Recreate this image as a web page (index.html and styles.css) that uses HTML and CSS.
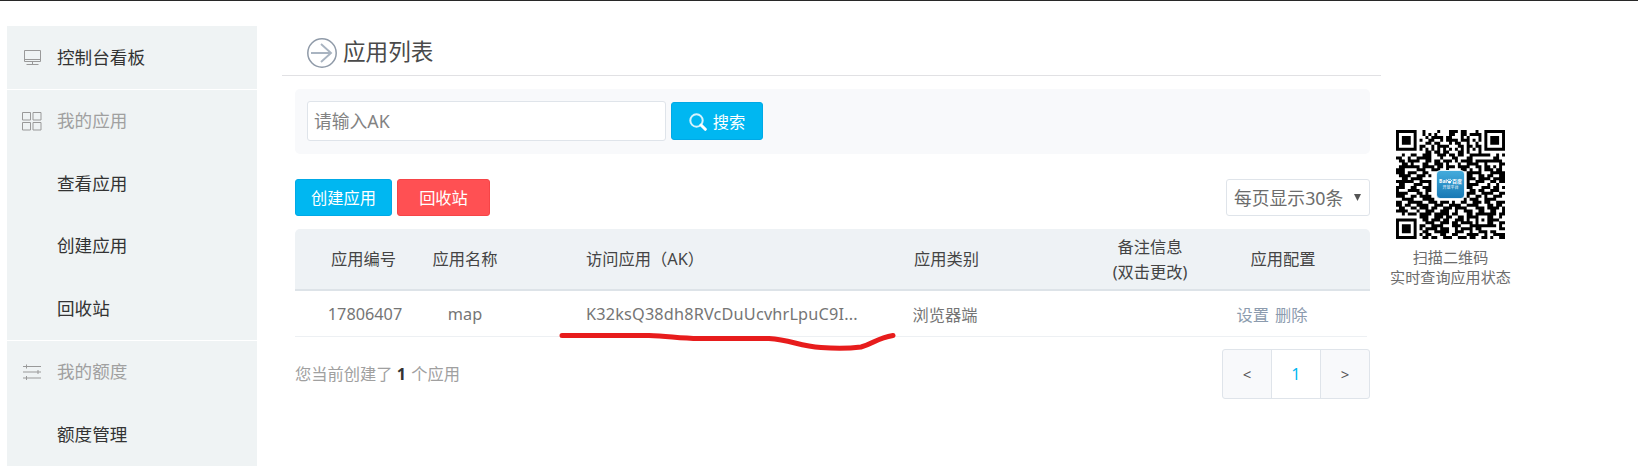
FILE: index.html
```html
<!DOCTYPE html>
<html lang="zh-CN">
<head>
<meta charset="utf-8">
<title>应用列表</title>
<link rel="stylesheet" href="styles.css">
</head>
<body>
<div class="page">
  <nav class="sidebar">
    <div class="group">
      <a class="item"><svg class="nav-icon" viewBox="0 0 20 20"><path d="M2.500 3.500h16v11h-16zM2.500 12.500h16M10.500 15v2.500M4.500 17.500h12"/></svg>控制台看板</a>
    </div>
    <div class="group">
      <a class="item muted"><svg class="nav-icon" viewBox="0 0 20 20"><path d="M.5 1.500h8v7.500h-8zM11 1.500h8v7.500h-8zM.5 11.500h8v7.500h-8zM11 11.500h8v7.500h-8z"/></svg>我的应用</a>
      <a class="item">查看应用</a>
      <a class="item">创建应用</a>
      <a class="item">回收站</a>
    </div>
    <div class="group">
      <a class="item muted"><svg class="nav-icon" viewBox="0 0 20 20"><path d="M1 4.500h18M1 10h18M1 16h18M4.500 2.500v4M16 8v4M4.500 14v4"/></svg>我的额度</a>
      <a class="item">额度管理</a>
    </div>
  </nav>
  <main class="main">
    <h1 class="title"><svg class="title-icon" viewBox="0 0 30 30"><circle cx="15" cy="15" r="14.200"/><path d="M4 15h19M14 6l10 9-10 9"/></svg>应用列表</h1>
    <div class="content">
      <div class="search">
        <input class="field" placeholder="请输入AK">
        <button class="btn search-btn"><svg class="search-icon" viewBox="0 0 18 18"><circle cx="7.500" cy="7.500" r="6.200"/><path d="M12 12l4.300 4.300" class="handle"/></svg>搜索</button>
      </div>
      <div class="toolbar">
        <button class="btn create">创建应用</button>
        <button class="btn recycle">回收站</button>
        <div class="select"><span>每页显示30条</span><svg class="caret" viewBox="0 0 8 8"><path d="M0 0h8L4 8z"/></svg></div>
      </div>
      <div class="row head">
        <div>应用编号</div><div>应用名称</div><div class="ak">访问应用（AK）</div><div>应用类别</div><div class="remark">备注信息<br>(双击更改)</div><div>应用配置</div>
      </div>
      <div class="row data">
        <div class="num">17806407</div><div>map</div><div class="ak key"><span class="key-text">K32ksQ38dh8RVcDuUcvhrLpuC9I...</span><svg class="underline" viewBox="0 0 336 20"><path d="M3 4.500H90C110 5 120 7.500 140 7.500H210C232 9 240 15 262 16.500C275 17.500 290 17.500 302 16C314 13 318 7 334 4.500"/></svg></div><div class="kind">浏览器端</div><div></div><div class="actions"><a>设置</a><a>删除</a></div>
      </div>
      <div class="footer">
        <p class="count">您当前创建了 <b>1</b> 个应用</p>
        <div class="pager"><span>&lt;</span><span class="current">1</span><span>&gt;</span></div>
      </div>
    </div>
  </main>
  <aside class="qr-box">
    <div class="qr"><svg id="qr" viewBox="0 0 37 37"></svg>
      <div class="badge"><span class="brand">Bai<svg class="paw" viewBox="0 0 8 8"><ellipse cx="4" cy="5.700" rx="2.600" ry="2.100"/><circle cx="1" cy="3.500" r="1"/><circle cx="2.900" cy="1.300" r="1"/><circle cx="5.100" cy="1.300" r="1"/><circle cx="7" cy="3.500" r="1"/></svg>百度</span><span class="sub">开放平台</span></div>
    </div>
    <p class="qr-text">扫描二维码<br>实时查询应用状态</p>
  </aside>
</div>
<script src="qr.js"></script>
</body>
</html>
```
FILE: styles.css
```css
* { box-sizing: border-box; }
body {
  margin: 0;
  height: 466px;
  overflow: hidden;
  background: #fff;
  border-top: 1px solid #282828;
  font-family: "Noto Sans", "Noto Sans CJK SC", sans-serif;
  font-size: 16.25px;
  font-weight: 400;
  color: #444;
}
.page { display: flex; padding-left: 7px; }
.sidebar { width: 250px; margin-top: 25px; font-size: 17.6px; color: #333; }
.group { background: #eff3f4; margin-bottom: 1px; }
.item { display: flex; align-items: center; height: 62.5px; padding: 0 0 2px 50px; }
.item.muted { color: #a0a0a0; }
.nav-icon { width: 20px; height: 20px; margin: 2px 15px 0 -35px; fill: none; stroke: #999; stroke-width: 1; }
.main { width: 1099px; margin-left: 25px; }
.title {
  display: flex; align-items: center; gap: 6px;
  height: 75px; margin: 0; padding: 26px 0 0 25px;
  border-bottom: 1px solid #e1e1e4;
  font-size: 22.6px; font-weight: 400; color: #4a4a4a; line-height: 47px;
}
.title-icon { width: 30px; height: 30px; margin-top: 4px; fill: none; stroke: #8f9aa8; stroke-width: 1.5; }
.title-icon path { stroke: #a9b4c1; stroke-width: 1.9; }
.content { width: 1075px; margin: 13px 0 0 13px; }
.search { display: flex; align-items: center; gap: 5px; height: 65px; padding: 0 0 2px 12px; border-radius: 5px; background: #f8f9fb; }
.field {
  width: 359px; height: 40px; padding: 0 6px;
  border: 1px solid #dfe4ea; border-radius: 3px; background: #fff;
  font: inherit; font-size: 17.8px;
}
.field::placeholder { color: #828282; }
.btn {
  height: 37px; padding: 0 0 1px; border: 1px solid #00a9e6; border-radius: 3px;
  background: #00b7f1; color: #fff; font: inherit;
}
.search-btn { display: flex; align-items: center; justify-content: center; gap: 6px; width: 92px; height: 38px; margin-top: 1px; }
.search-icon { width: 18px; height: 18px; margin-top: 2px; fill: none; stroke: #d5f3fd; stroke-width: 2; }
.handle { stroke: #fff; stroke-width: 3; stroke-linecap: round; }
.toolbar { display: flex; gap: 5px; margin-top: 25px; }
.create { width: 97px; }
.recycle { width: 93px; background: #ff5053; border-color: #f64447; }
.select {
  display: flex; align-items: center; justify-content: space-between;
  width: 144px; height: 37px; margin-left: auto; padding: 0 8px 1px 7px;
  border: 1px solid #dfe4ea; border-radius: 3px;
  font-size: 17.8px; color: #6c6c6c;
}
.caret { width: 7px; height: 7px; fill: #555; margin-top: 0; }
.row { display: grid; grid-template-columns: 137px 66px 382px 133px 204px 132px; align-items: center; text-align: center; white-space: nowrap; }
.head { height: 62px; margin-top: 13px; border-radius: 5px 5px 0 0; border-bottom: 2px solid #dde3e8; background: #eef2f5; line-height: 25px; padding-top: 1px; }
.ak { padding-left: 88px; text-align: left; }
.remark { padding-left: 70px; }
.data { height: 46px; margin: 0 3px 0 0; color: #757575; box-shadow: inset 0 -1px #edf0f3; }
.key { position: relative; }
.key-text { letter-spacing: .18px; }
.underline { position: absolute; left: 61px; top: 28px; width: 336px; height: 20px; overflow: visible; z-index: 1; }
.underline path { fill: none; stroke: #e71c1c; stroke-width: 5; stroke-linecap: round; stroke-linejoin: round; }
.num { padding-left: 3px; }
.kind { padding-right: 3px; }
.actions { display: flex; justify-content: center; gap: 6px; padding-right: 22px; color: #8c9bae; }
.footer { display: flex; justify-content: space-between; margin-top: 12px; }
.count { margin: 0; line-height: 50px; color: #a0a0a0; }
.count b { color: #333; margin: 0 1px 0 0; }
.pager { display: flex; width: 148px; height: 50px; border: 1px solid #dfe4ea; border-radius: 3px; background: #f8f9fb; color: #555; font-size: 15px; }
.pager span { flex: 1; display: flex; align-items: center; justify-content: center; }
.pager .current { border: solid #dfe4ea; border-width: 0 1px; background: #fff; color: #00b7f1; font-size: 16.25px; }
.qr-box { width: 140px; margin-top: 129px; }
.qr { position: relative; width: 109px; height: 109px; margin-left: 15px; }
.qr > svg { display: block; width: 109px; height: 109px; }
.badge {
  position: absolute; left: 40px; top: 40px; width: 29px; height: 29px;
  display: flex; flex-direction: column; align-items: center; justify-content: center; gap: 1px;
  border: 1px solid #e4f3fa; border-radius: 4px; background: linear-gradient(#43abdc, #1779b5);
  color: #fff; white-space: nowrap; line-height: 6px;
}
.brand { display: flex; align-items: center; font-size: 5px; font-weight: 700; }
.paw { width: 5px; height: 6px; fill: #fff; }
.sub { font-size: 4px; }
.qr-text { margin: 8px 0 0; width: 139px; text-align: center; font-size: 15.1px; line-height: 20px; color: #6c6c6c; white-space: nowrap; }
```
FILE: qr.js
```js
const rows = [
  "1111111001000010001110110001001111111",
  "1000001001010100001100110111101000001",
  "1011101000101111011000101000101011101",
  "1011101010011001011110111010101011101",
  "1011101000110110001011001001001011101",
  "1000001011001011110001101101101000001",
  "1111111010101010101010101010101111111",
  "0000000000110110110001101000100000000",
  "0010011001110011101101100111111100101",
  "1100100111110001000110001100000001100",
  "0110111100110110111010111101111111110",
  "0011010001100111010001001111001000011",
  "0111111101111011011101111001101101010",
  "1110000111001110010000110100101110110",
  "1110111001100000000000001111100011111",
  "0111100111010000000000001100110110011",
  "0011011110000000000000001110111101111",
  "1111110011110000000000001001110011011",
  "0110001110010000000000001111000100100",
  "1110011001110000000000001100011101101",
  "1000111100110000000000000110110011100",
  "1111000110100000000000001110011110011",
  "1110011011110000000000001001101001110",
  "0011110001111000000000010111001111000",
  "1100111110011101110100110011101100111",
  "1101100111100111001111001111000110110",
  "0110011011101100111011110001110111101",
  "1111000100111001110010011100110011001",
  "0010111011110111110110001101111111011",
  "0000000011100111011001101111000110010",
  "1111111001101110110011101001010111100",
  "1000001000111001110110111101000110011",
  "1011101011001111000111000111111111010",
  "1011101010111101110010111101100000011",
  "1011101001100111110011100100111011000",
  "1000001010110001100110001111001001111",
  "1111111001101100111001110110011010011"
];

// Each run of dark modules becomes one closed subpath.
const path = rows.map((row, y) =>
  [...row.matchAll(/1+/g)].map(run => `M${run.index} ${y}h${run[0].length}v1.02h-${run[0].length}z`).join("")
).join("");
document.getElementById("qr").innerHTML = `<path d="${path}"/>`;
```
